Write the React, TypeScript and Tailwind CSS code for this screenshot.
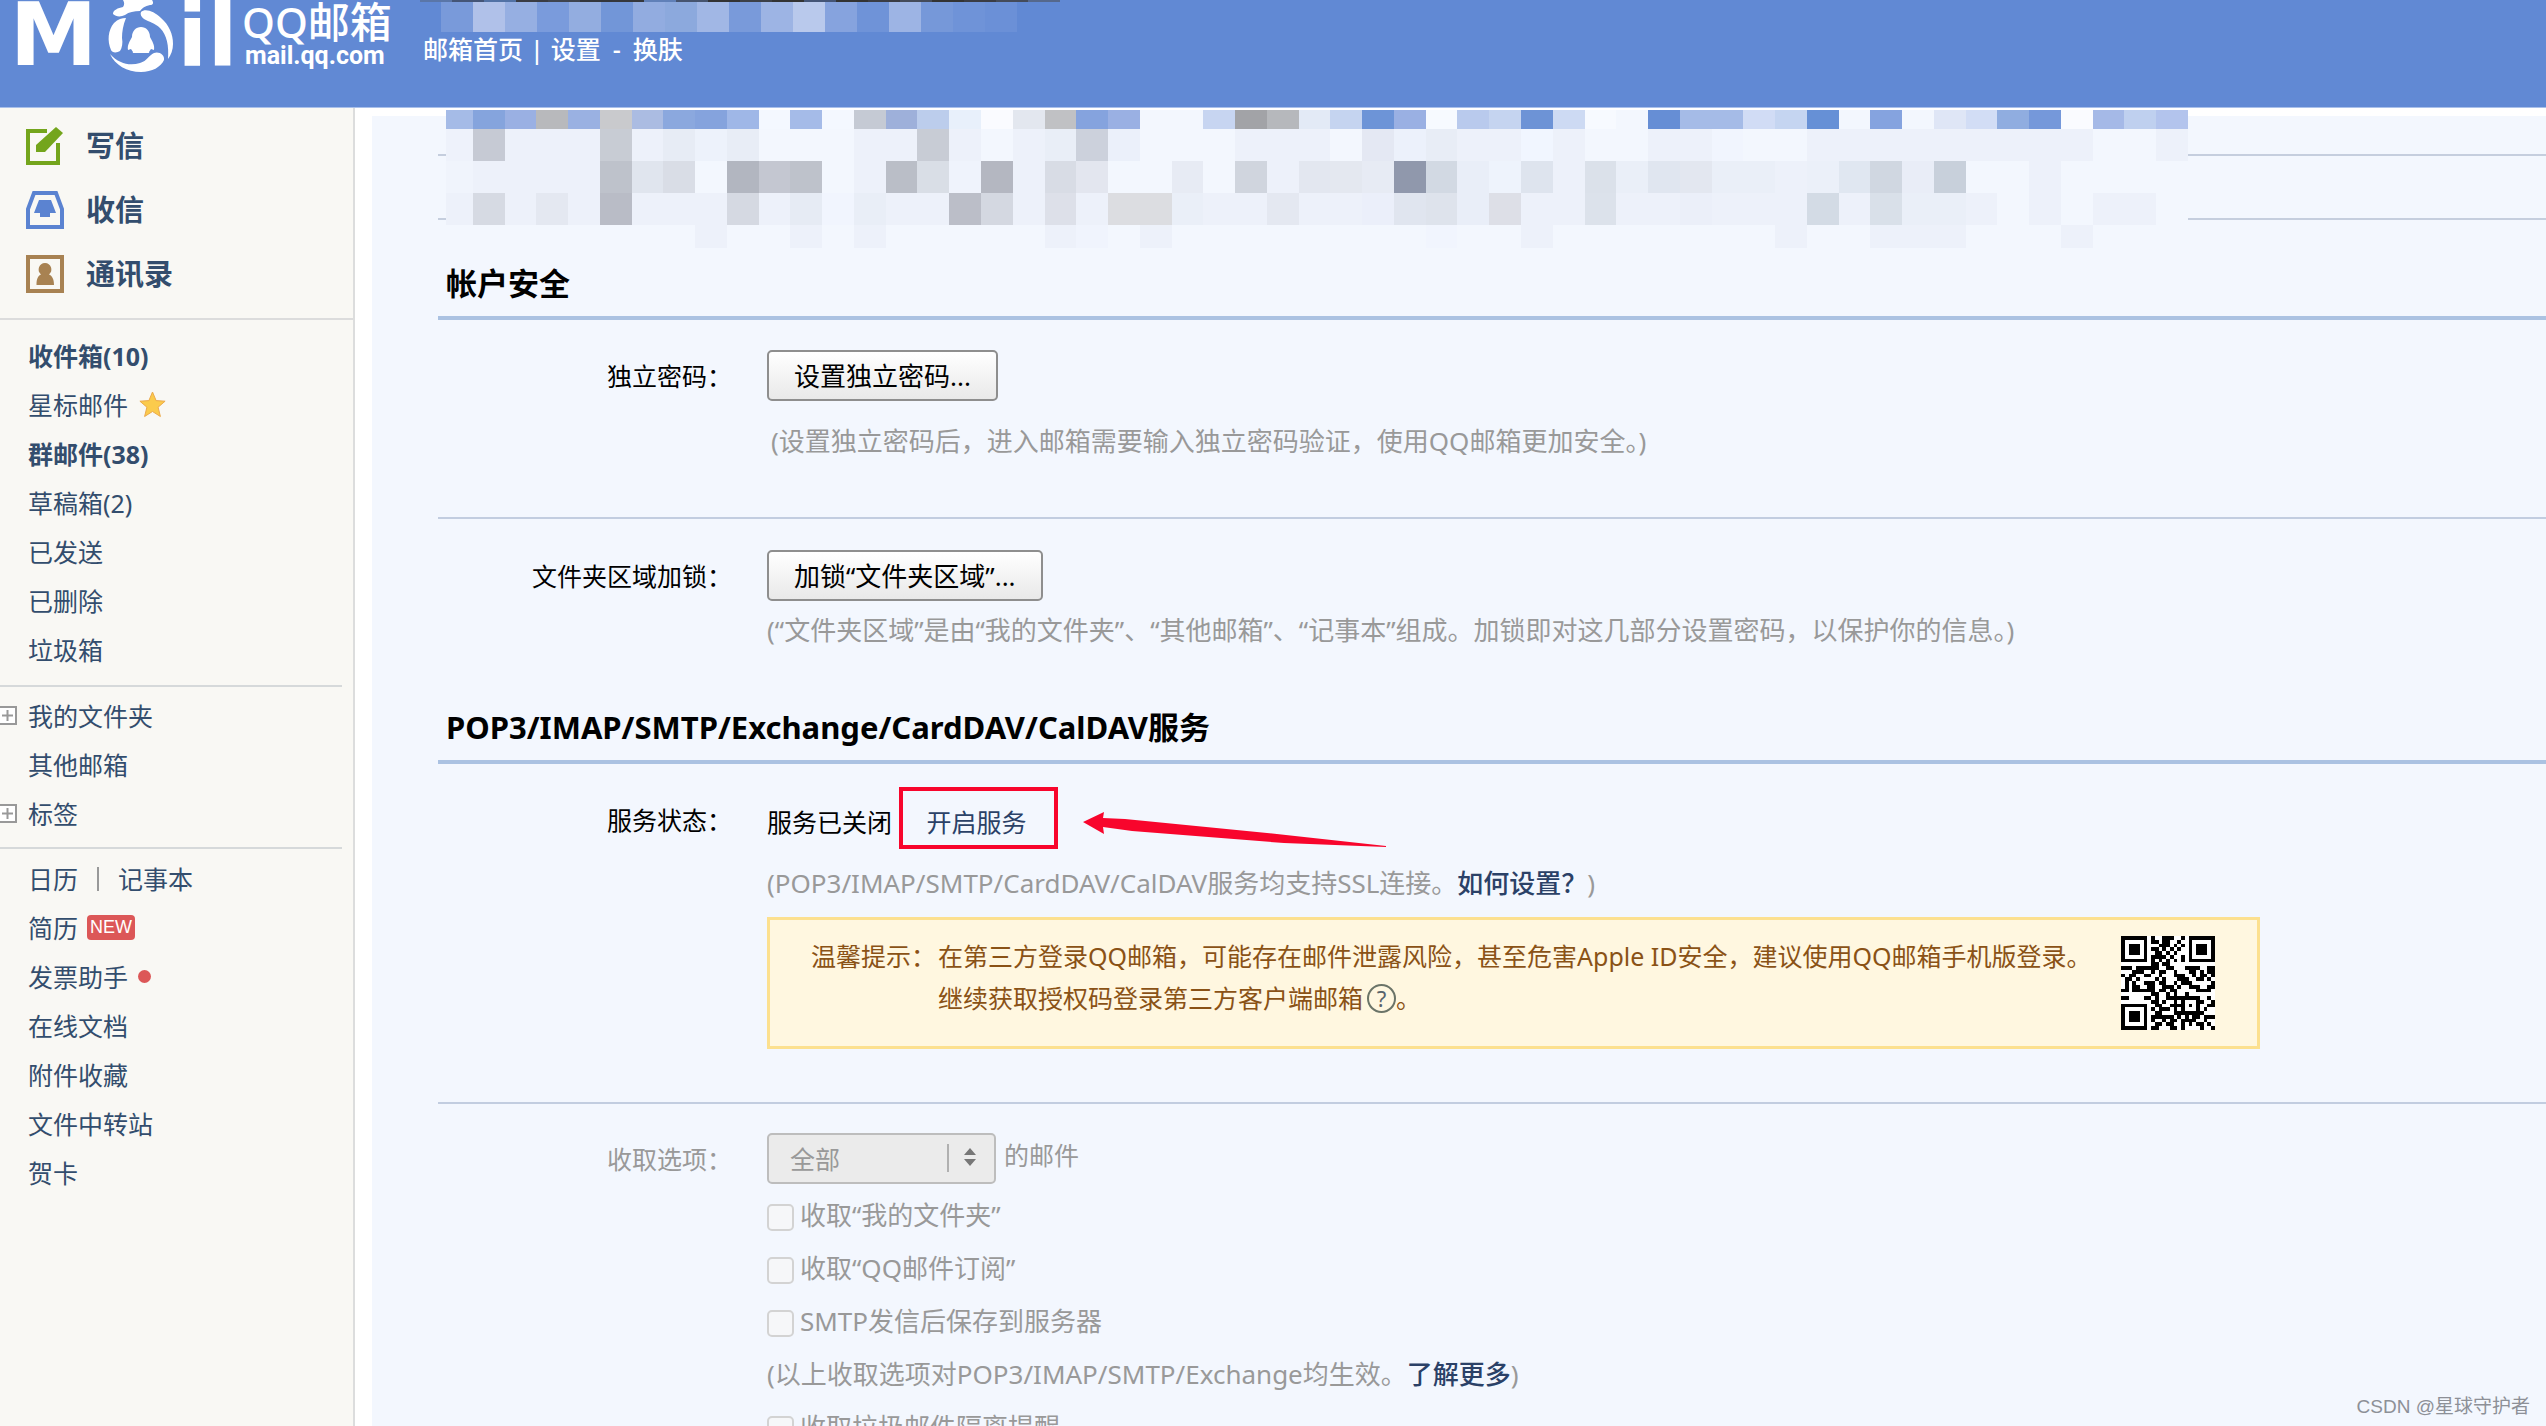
import type { ReactNode } from 'react';

const B = '';
const L = '#edf1fa';

const MOSAIC: { top: number; height: number; cells: string[] }[] = [
  {
    top: 0,
    height: 19,
    cells: ['#a5bbe7', '#85a4dd', '#9ab0e3', '#b8b9bc', '#9ab1e2', '#c9cacd', '#abbce2', '#8ba8de', '#85a3dd', '#9fb7e7', '#f4f8ff', '#a5bbe8', '#f4f8ff', '#c5cad4', '#9eb0da', '#bccdec', '#e8f0fb', '#fafbff', '#e3e7ef', '#c0c1c4', '#85a3de', '#9ab0e3', B, B, '#c7d5f1', '#a2a3a7', '#b6b8bc', '#e3eaf6', '#c5d4f0', '#6d94d7', '#9ab0e3', '#f7faff', '#b9caed', '#c5d4f0', '#6d93d6', '#cddaf3', '#f7faff', B, '#668ed5', '#a5bbe7', '#a5bbe7', '#d1dcf5', '#c5d5f1', '#6690d6', B, '#85a3df', B, '#dfe6f6', '#d2ddf5', '#90ade0', '#7598da', '#fafbff', '#a5b9e7', '#bfd0ef', '#b3c4ed'],
  },
  {
    top: 19,
    height: 32,
    cells: ['#eef2fb', '#c6cad4', L, L, L, '#c8ccd4', L, '#e7ecf5', '#edf2fb', '#e8edf6', B, B, B, L, L, '#c8ccd5', L, B, L, '#e9eef7', '#ccd1dc', '#ebf0fa', B, B, B, L, L, L, B, '#e4e8f3', '#ecf1fb', '#e8edf6', L, L, '#f1f6ff', L, B, B, L, L, '#f1f5fe', B, B, L, L, L, L, L, L, L, L, L, B, B, L],
  },
  {
    top: 51,
    height: 32,
    cells: ['#f0f4fc', L, L, L, L, '#bec2cb', '#e0e5ee', '#d9dde6', B, '#b2b6c0', '#c4c7d1', '#bec2cb', B, L, '#babec7', '#d9dee6', '#eff3fc', '#b4b7c1', L, '#d8dce5', '#e3e6ef', B, B, '#e7ebf4', B, '#d0d5de', L, '#e3e7f0', '#e4e8f0', '#e7ebf4', '#9098ac', '#d2d9e3', '#e9eef8', '#eef3fc', '#dee4ee', L, '#dbe1ea', '#eaeff8', '#e0e6f0', '#e3e7f0', '#eaeff8', '#eaeff8', L, '#ebf0f9', '#e0e7f1', '#d0d7e1', '#e9edf7', '#c8d0db', B, B, L, B, B, B, B],
  },
  {
    top: 83,
    height: 32,
    cells: [L, '#d6dae3', L, '#e4e8f1', L, '#b9bcc6', L, L, L, '#d5d9e2', L, '#e6ebf4', '#f1f5fe', '#e9eef7', L, L, '#bbbec8', '#d4d8e1', L, '#dde0e9', L, '#dcdde1', '#dcdde1', '#eaeff8', L, L, '#e4e8f1', L, L, '#ebeffa', '#e0e5ef', '#dee3ec', '#e9eef8', '#dddfe7', L, L, '#dce2eb', L, L, '#ebeff9', L, L, L, '#d3dbe5', L, '#d9e0e9', '#eaeff8', '#eaeff8', L, B, L, B, L, L, B],
  },
  {
    top: 115,
    height: 23,
    cells: [B, B, B, B, B, B, B, B, L, B, B, L, B, L, B, B, B, B, B, L, '#f0f4fd', B, L, B, B, B, B, B, B, B, B, '#f1f5fe', B, B, L, B, B, B, B, B, B, B, L, B, B, L, L, L, B, B, B, L, B, B, B],
  },
];

function Mosaic() {
  return (
    <svg className="absolute left-[74px] -top-[6px] h-[138px] w-[calc(100%-432px)]" viewBox="0 0 1755 138" preserveAspectRatio="none" shapeRendering="crispEdges" aria-hidden="true">
      <rect width="1755" height="138" fill="#f3f7fe" />
      {MOSAIC.map((row) =>
        row.cells.map((fill, i) =>
          fill ? <rect key={`${row.top}-${i}`} x={i === 0 ? 0 : i * 32 - 5} y={row.top} width={i === 0 ? 27 : 32} height={row.height} fill={fill} /> : null,
        ),
      )}
    </svg>
  );
}

const STRIP = ['#5a76a8', '#445577', '#5272a5', '#3a3c44', '#3f444f', '#33363c', '#35373c', '#6080b8', '#46546f', '#333', '#3c4048', '#333', '#445577', '#333', '#3a3c44', '#444b5a', '#333', '#3a3c44', '#444b5a', '#55688c'];
const ADDRESS = ['#799ada', '#b0c1e9', '#96afe2', '#7a9bdc', '#93ade0', '#7296d8', '#92ace0', '#8ca9dd', '#a1b7e5', '#799ada', '#9db4e4', '#b9c9ec', '#86a3de', '#6f93d8', '#9db4e4', '#7698d9', '#6f93d8', '#6b90d7'];

function HeaderMosaic() {
  return (
    <svg className="absolute left-[420px] top-0 h-[32px] w-[640px]" viewBox="0 0 640 32" shapeRendering="crispEdges" aria-hidden="true">
      {STRIP.map((fill, i) => (
        <rect key={i} x={i * 32} y="0" width="32" height="2" fill={fill} />
      ))}
      {ADDRESS.map((fill, i) => (
        <rect key={i} x={21 + i * 32} y="2" width="32" height="30" fill={fill} />
      ))}
    </svg>
  );
}

function Swirl() {
  return (
    <svg className="h-[100px] w-[66px] shrink-0" viewBox="107 0 66 100" fill="#fff" aria-hidden="true">
      <path d="M123 0h29c2 3 1 5-2 5-5 1-8 3-10 6-6 0-11 1-15 4-4 2-9 2-12-1 0-4 5-6 10-7 2-3 1-5 0-7z" />
      <path d="M126 18c-3 7-4 14-4 20 1 5 0 10-2 13-3 2-8 2-9-1-4-9-3-20 3-27 4-4 8-5 12-5z" />
      <path d="M141 12c4-4 13-1 20 6 8 7 12 16 12 26 0 6-2 11-5 15 1-13-1-24-8-31-5-5-11-6-16-9-3-2-4-5-3-7z" />
      <path d="M110 54c9 10 20 12 30 9 7-2 9-8 14-10 5-2 11 2 10 7-3 7-12 12-23 12-14 0-26-7-31-18z" />
      <path d="M141 27c5 0 9 4 9 10 2 4 5 8 4 13l-3-1-2 3c1 1-1 1-3 1h-10c-2 0-4 0-3-1l-2-3-3 1c-1-5 2-9 4-13 0-6 4-10 9-10z" />
    </svg>
  );
}

function ComposeIcon() {
  return (
    <svg className="size-[38px]" viewBox="0 0 38 38" aria-hidden="true">
      <path d="M21 4H2v32h30V16" fill="none" stroke="#74a51c" strokeWidth="4" />
      <path d="M30 0l7 6-18 19h-9v-7z" fill="#74a51c" />
    </svg>
  );
}

function InboxIcon() {
  return (
    <svg className="size-[38px]" viewBox="0 0 38 38" aria-hidden="true">
      <path d="M8 2h22l6 16v18H2V18z" fill="none" stroke="#5b83d1" strokeWidth="4" />
      <path d="M13 9h12l5 13h-6v4h-10v-4H8z" fill="#5b83d1" />
    </svg>
  );
}

function ContactsIcon() {
  return (
    <svg className="size-[38px]" viewBox="0 0 38 38" aria-hidden="true">
      <rect x="2" y="2" width="34" height="34" fill="none" stroke="#a88252" strokeWidth="4" />
      <path d="M19 8a6.500 6.500 0 0 1 4 11.500c3 1.500 5 4 5 10.500H10.500c0-6.500 1.500-9 4.500-10.500A6.500 6.500 0 0 1 19 8z" fill="#a88252" />
    </svg>
  );
}

function StarIcon() {
  return (
    <svg className="size-[27px]" viewBox="0 0 27 27" aria-hidden="true">
      <path d="M13.500 1l3.600 8.600 9 .6-7 6 2.300 9.300-7.900-5-7.900 5L7.900 16.200l-7-6 9-.6z" fill="#fbcb4c" stroke="#eca94b" strokeWidth="1" />
    </svg>
  );
}

function Expand({ label }: { label: string }) {
  return (
    <button type="button" aria-label={`展开${label}`} className="-ml-[2px] mr-[11px] size-[19px] shrink-0">
      <svg className="size-[19px]" viewBox="0 0 19 19" aria-hidden="true">
        <rect x="1" y="1" width="17" height="17" fill="#fff" stroke="#999" strokeWidth="2" />
        <path d="M4 9.500h11M9.500 4v11" stroke="#999" strokeWidth="2" />
      </svg>
    </button>
  );
}

const QR = [
  '1111111010011100101111111',
  '1000001011011001001000001',
  '1011101000111010101011101',
  '1011101011010101001011101',
  '1011101001101010001011101',
  '1000001011110100101000001',
  '1111111010101010101111111',
  '0000000011011000000000000',
  '1110111111001100011110011',
  '0001110010110010001101011',
  '1011001100100011100101101',
  '0110100001010001110011010',
  '0101001110110010111000001',
  '0101100110011101001110011',
  '1101111110110110000011110',
  '0000000011001010010000000',
  '1100001101001111111110010',
  '0000000011010010100011001',
  '1111111001100111101010011',
  '1000001010111010100010100',
  '1011101001100011111111000',
  '1011101011111101010110111',
  '1011101010010110111100100',
  '1000001001101100101011010',
  '1111111011000110100001001',
];

function QrCode() {
  return (
    <svg className="mt-[16px] size-[94px] shrink-0" viewBox="0 0 25 25" shapeRendering="crispEdges" role="img" aria-label="QQ邮箱手机版二维码">
      <rect width="25" height="25" fill="#fff" />
      {QR.map((row, y) => row.split('').map((c, x) => (c === '1' ? <rect key={`${x}-${y}`} x={x} y={y} width="1" height="1" fill="#000" /> : null)))}
    </svg>
  );
}

function NavItem({ label, bold, expand, children }: { label: string; bold?: boolean; expand?: boolean; children?: ReactNode }) {
  return (
    <li className={expand ? 'flex h-[49px] items-center' : 'flex h-[49px] items-center pl-[28px]'}>
      {expand && <Expand label={label} />}
      <a href="#" className={bold ? 'font-bold' : undefined}>{label}</a>
      {children}
    </li>
  );
}

function Row({ label, muted, className, labelClass, children }: { label: string; muted?: boolean; className: string; labelClass: string; children: ReactNode }) {
  return (
    <div className={`flex ${className}`}>
      <div className={`flex w-[294px] shrink-0 items-center justify-end ${labelClass} ${muted ? 'text-[#999]' : 'text-black'}`}>{label}</div>
      <div className="ml-[35px] min-w-0 grow">{children}</div>
    </div>
  );
}

function Heading({ children }: { children: ReactNode }) {
  return <h2 className="flex h-[70px] items-center border-b-4 border-[#abc2e2] pl-[8px] text-[31px] font-bold text-black">{children}</h2>;
}

function PushButton({ children }: { children: ReactNode }) {
  return (
    <button type="button" className="flex h-[51px] items-center rounded-[5px] border-2 border-[#8e8e8e] bg-linear-to-b from-white to-[#e9e9e9] px-[25px] text-[26px] text-black">
      {children}
    </button>
  );
}

function Check({ id, label }: { id: string; label: string }) {
  return (
    <div className="flex h-[53px] items-center gap-[6px]">
      <input id={id} type="checkbox" disabled className="size-[27px] appearance-none rounded-[5px] border-2 border-[#d3d3d3] bg-[#f6f7f9]" />
      <label htmlFor={id} className="pb-[5px]">{label}</label>
    </div>
  );
}

export default function App() {
  return (
    <div className="flex h-screen flex-col overflow-hidden bg-white font-['Noto_Sans','Noto_Sans_CJK_SC',sans-serif] text-[25px] leading-[36px]">
      <header className="relative flex h-[108px] shrink-0 overflow-hidden border-b border-[#a9c0ea] bg-[#6189d4] text-white">
        <a href="#" aria-label="QQ邮箱" className="flex w-[423px] shrink-0">
          <span className="w-[107px] shrink-0 text-center font-['DejaVu_Sans',sans-serif] text-[88px] leading-[70px] font-bold">M</span>
          <Swirl />
          <span className="flex w-[69px] shrink-0 justify-center font-['DejaVu_Sans',sans-serif] text-[88px] leading-[70px] font-bold">il</span>
          <span className="flex flex-col">
            <span className="text-[42px] leading-[44px] font-medium">QQ邮箱</span>
            <span className="pl-[3px] font-['Roboto',sans-serif] text-[25px] leading-[24px] font-bold">mail.qq.com</span>
          </span>
        </a>
        <HeaderMosaic />
        <nav className="flex gap-[7px] pt-[31px] font-medium">
          <a href="#">邮箱首页</a>
          <span>|</span>
          <a href="#">设置</a>
          <span className="px-[5px]">-</span>
          <a href="#">换肤</a>
        </nav>
      </header>

      <div className="flex min-h-0 grow">
        <aside className="w-[355px] shrink-0 border-r-2 border-[#dcdddd] bg-[#f9f8f4] pt-[6px] text-[#334d6d]">
          <ul className="border-b-2 border-[#dcdcdc] pb-[12px] text-[29px] font-bold">
            <li className="flex h-[64px] items-center gap-[22px] pl-[26px]"><ComposeIcon /><a href="#">写信</a></li>
            <li className="flex h-[64px] items-center gap-[22px] pl-[26px]"><InboxIcon /><a href="#">收信</a></li>
            <li className="flex h-[64px] items-center gap-[22px] pl-[26px]"><ContactsIcon /><a href="#">通讯录</a></li>
          </ul>
          <ul className="mr-[11px] border-b-2 border-[#d6d9da] pt-[11px] pb-[11px]">
            <NavItem label="收件箱(10)" bold />
            <NavItem label="星标邮件"><span className="ml-[11px]"><StarIcon /></span></NavItem>
            <NavItem label="群邮件(38)" bold />
            <NavItem label="草稿箱(2)" />
            <NavItem label="已发送" />
            <NavItem label="已删除" />
            <NavItem label="垃圾箱" />
          </ul>
          <ul className="mr-[11px] border-b-2 border-[#d6d9da] pt-[4px] pb-[9px]">
            <NavItem label="我的文件夹" expand />
            <NavItem label="其他邮箱" />
            <NavItem label="标签" expand />
          </ul>
          <ul className="pt-[5px]">
            <NavItem label="日历">
              <span className="mx-[19px] h-[24px] w-[2px] bg-[#999]" />
              <a href="#">记事本</a>
            </NavItem>
            <NavItem label="简历"><span className="ml-[9px] rounded-[4px] bg-[#dc5757] px-[3px] font-['Liberation_Sans',sans-serif] text-[18px] leading-[25px] text-white">NEW</span></NavItem>
            <NavItem label="发票助手"><span className="ml-[10px] size-[13px] rounded-full bg-[#dc5757]" /></NavItem>
            <NavItem label="在线文档" />
            <NavItem label="附件收藏" />
            <NavItem label="文件中转站" />
            <NavItem label="贺卡" />
          </ul>
        </aside>

        <main className="min-w-0 grow pt-[8px] pl-[17px]">
          <div className="relative min-h-full bg-[#f3f7fe] pl-[66px] text-[#999]">
            <div className="h-[40px] border-b-2 border-[#c5cede]" />
            <div className="h-[64px] border-b-2 border-[#c5cede]" />
            <Mosaic />

            <div className="mt-[30px]"><Heading>帐户安全</Heading></div>
            <Row label="独立密码：" className="border-b-2 border-[#c2cde0] pt-[30px] pb-[58px]" labelClass="h-[51px]">
              <PushButton>设置独立密码...</PushButton>
              <p className="mt-[22px] pl-[4px] text-[26px]">(设置独立密码后，进入邮箱需要输入独立密码验证，使用QQ邮箱更加安全。)</p>
            </Row>
            <Row label="文件夹区域加锁：" className="pt-[31px]" labelClass="h-[51px]">
              <PushButton>加锁“文件夹区域”...</PushButton>
              <p className="mt-[11px] text-[26px]">(“文件夹区域”是由“我的文件夹”、“其他邮箱”、“记事本”组成。加锁即对这几部分设置密码，以保护你的信息。)</p>
            </Row>

            <div className="mt-[46px]"><Heading>POP3/IMAP/SMTP/Exchange/CardDAV/CalDAV服务</Heading></div>
            <Row label="服务状态：" className="border-b-2 border-[#c2cde0] pt-[23px] pb-[53px]" labelClass="h-[66px]">
              <div className="flex h-[62px] items-center">
                <span className="pt-[8px] text-black">服务已关闭</span>
                <a href="#" className="ml-[7px] flex h-[62px] w-[159px] items-center justify-center border-4 border-[#f8052c] pt-[8px] pr-[4px] text-[#2b4167]">开启服务</a>
                <svg className="ml-[25px] h-[62px] w-[304px]" viewBox="0 0 304 62" aria-hidden="true">
                  <path d="M0 35L21 25l-1 6 22 1 142 14 119 13v1l-102-4-152-12-29-4 1 7z" fill="#f8052c" />
                </svg>
              </div>
              <p className="mt-[16px] text-[26px]">(POP3/IMAP/SMTP/CardDAV/CalDAV服务均支持SSL连接。<a href="#" className="font-medium text-[#2b4167]">如何设置？</a>)</p>
              <div className="mt-[16px] flex h-[132px] w-fit border-[3px] border-[#fce08f] bg-[#fff7e0] pr-[42px] pl-[41px] text-[#8a5216]">
                <div className="pt-[15px] leading-[42px]">温馨提示：</div>
                <div className="pt-[15px] pr-[29px] pl-[2px] leading-[42px]">
                  <p>在第三方登录QQ邮箱，可能存在邮件泄露风险，甚至危害Apple ID安全，建议使用QQ邮箱手机版登录。</p>
                  <p className="flex items-center">
                    继续获取授权码登录第三方客户端邮箱
                    <a href="#" aria-label="帮助" className="ml-[4px] flex size-[29px] items-center justify-center rounded-full border-2 border-[#6b7468] text-[22px] leading-[25px] text-[#59636b]">?</a>
                    。
                  </p>
                </div>
                <QrCode />
              </div>
            </Row>

            <Row label="收取选项：" muted className="pt-[29px]" labelClass="h-[52px]">
              <div className="flex items-center gap-[8px]">
                <div className="relative">
                  <select id="scope" aria-label="收取选项" disabled className="h-[51px] w-[229px] appearance-none rounded-[5px] border-2 border-[#bdbdbd] bg-[#ebebeb] pl-[21px] text-[#999] opacity-100">
                    <option>全部</option>
                  </select>
                  <svg className="pointer-events-none absolute top-[11px] right-[17px] h-[28px] w-[32px]" viewBox="0 0 32 28" aria-hidden="true">
                    <path d="M1 0v28" stroke="#b0b0b0" strokeWidth="2" />
                    <path d="M17 11l6-7 6 7zM17 15h12l-6 7z" fill="#777" />
                  </svg>
                </div>
                <label htmlFor="scope" className="pb-[7px]">的邮件</label>
              </div>
              <div className="mt-[7px] text-[26px]">
                <Check id="c1" label="收取“我的文件夹”" />
                <Check id="c2" label="收取“QQ邮件订阅”" />
                <Check id="c3" label="SMTP发信后保存到服务器" />
                <p className="flex h-[53px] items-center pb-[5px]">(以上收取选项对POP3/IMAP/SMTP/Exchange均生效。<a href="#" className="font-medium text-[#2b4167]">了解更多</a>)</p>
                <Check id="c4" label="收取垃圾邮件隔离提醒" />
              </div>
            </Row>
          </div>
        </main>
      </div>
      <div className="absolute right-[16px] bottom-[6px] font-['Liberation_Sans','Noto_Sans_CJK_SC',sans-serif] text-[19px] leading-[26px] text-[#8d9097]">CSDN @星球守护者</div>
    </div>
  );
}
